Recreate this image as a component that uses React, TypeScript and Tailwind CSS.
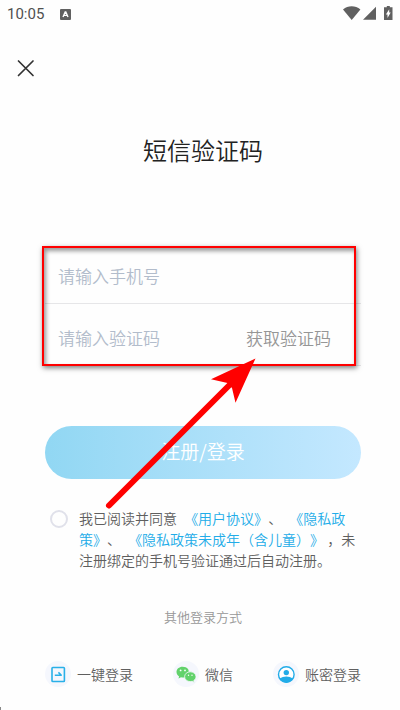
import { useState } from "react";

function StatusBar() {
  return (
    <div className="flex h-7 items-center justify-between px-[7px] text-[#606060]">
      <div className="flex items-center gap-4">
        <span className="font-[Roboto,sans-serif] text-[15px] font-normal leading-7 text-[#505050]">10:05</span>
        <svg viewBox="0 0 11 11" className="size-[11px]" aria-hidden="true">
          <rect width="11" height="11" rx="1" fill="currentColor" />
          <path
            d="M3 8 5.2 3h.6L8 8M3.9 6.4h3.2"
            fill="none"
            stroke="#fff"
            strokeWidth="1.4"
          />
        </svg>
      </div>
      <svg viewBox="0 0 50 16" className="h-4 w-[50px]" fill="currentColor" aria-hidden="true">
        <path d="M0 3.500C5-.7 12.400-.7 17.400 3.500L8.700 14Z" />
        <path d="M33 .8V13.800H20Z" />
        <path d="M43.800 0h3v1.200H49.500v12.800H41V1.200h2.800Z" />
        <path d="M46.200 3.200v3.300h1.500l-3.200 5.600V8.400h-1.600Z" fill="#fff" />
      </svg>
    </div>
  );
}

// Seta vermelha que aponta para o botão do código
function Arrow() {
  return (
    <svg
      viewBox="0 0 156 156"
      className="pointer-events-none absolute left-[59px] top-[114px] z-10 size-[156px]"
      aria-hidden="true"
    >
      <path d="M5 149.500 131 23.500" stroke="#f00" strokeWidth="6" strokeLinecap="round" />
      <path d="M151.500 2.500 107 23.200 123.500 27 128 32 131.500 46.800Z" fill="#f00" />
    </svg>
  );
}

function OneKeyIcon() {
  return (
    <svg viewBox="0 0 26 26" className="size-[26px]" fill="none" aria-hidden="true">
      <rect x="7" y="6.500" width="12.400" height="14" rx=".8" stroke="#29b0e8" strokeWidth="1.600" />
      <path d="M9.800 14.200h7M13.400 11.400l3 2.800" stroke="#29b0e8" strokeWidth="1.500" />
    </svg>
  );
}

function WechatIcon() {
  return (
    <svg viewBox="0 0 26 26" className="size-[26px]" aria-hidden="true">
      <path
        d="M9.600 5.700C5.900 5.700 3.500 8 3.500 11c0 1.900 1 3.400 2.600 4.400l-.6 2.200 2.500-1.300c1 .3 2.200.4 3.300.2C17 15.500 16 9.500 15 8 13.800 6.500 12 5.700 9.600 5.700Z"
        fill="#62d26b"
      />
      <path
        d="M17.300 10.800c-3.300 0-5.700 2.200-5.700 4.900s2.400 4.900 5.700 4.900c.7 0 1.400-.1 2-.3l2 1.100-.5-1.900c1.400-.9 2.200-2.200 2.200-3.800 0-2.700-2.500-4.900-5.700-4.900Z"
        fill="#62d26b"
        stroke="#f5f7fd"
        strokeWidth=".8"
      />
      <circle cx="7.600" cy="9.400" r=".9" fill="#fff" />
      <circle cx="12" cy="9.400" r=".9" fill="#fff" />
      <circle cx="15.500" cy="14.200" r=".7" fill="#fff" />
      <circle cx="19" cy="14.200" r=".7" fill="#fff" />
    </svg>
  );
}

function AccountIcon() {
  return (
    <svg viewBox="0 0 26 26" className="size-[26px]" aria-hidden="true">
      <circle cx="13.300" cy="13.500" r="7.800" fill="#fff" stroke="#22ace8" strokeWidth="1.400" />
      <circle cx="13.300" cy="11.600" r="2.700" fill="#22ace8" />
      <path d="M6.700 17.500c3.800-2.700 9.400-2.700 13.200 0-1.200 2.300-3.600 4.200-6.600 4.200s-5.400-1.900-6.600-4.200Z" fill="#22ace8" />
    </svg>
  );
}

const loginMethods = [
  { label: "一键登录", Icon: OneKeyIcon },
  { label: "微信", Icon: WechatIcon },
  { label: "账密登录", Icon: AccountIcon },
];

const inputClass =
  "min-w-0 flex-1 bg-transparent text-[17px] text-[#333] outline-none placeholder:text-[#b2bccb]";

export default function App() {
  const [phone, setPhone] = useState("");
  const [code, setCode] = useState("");
  const [agreed, setAgreed] = useState(false);

  return (
    <div className="relative min-h-screen bg-[#fefefe] font-['Noto_Sans_CJK_SC',sans-serif] font-[350] text-[#5f5f5f]">
      <StatusBar />
      <header className="flex px-4 pt-7">
        <button type="button" aria-label="关闭" className="flex size-6 items-center">
          <svg viewBox="0 0 20 20" className="size-5" aria-hidden="true">
            <path d="m2.500 3 14.500 14.500M17 3 2.500 17.500" stroke="#333" strokeWidth="1.700" strokeLinecap="round" />
          </svg>
        </button>
      </header>

      <main className="pl-[45px] pr-[39px]">
        <h1 className="mt-[52px] text-center text-2xl font-[350] leading-9 text-[#222]">短信验证码</h1>

        <form className="relative mt-[74px]" onSubmit={(e) => e.preventDefault()}>
          <div className="relative">
            <div className="flex h-[62px] items-center border-b border-[#e6e6e8] px-[13px] pt-[6px]">
              <input
                type="tel"
                aria-label="手机号"
                placeholder="请输入手机号"
                className={inputClass}
                value={phone}
                onChange={(e) => setPhone(e.target.value)}
              />
            </div>
            <div className="flex h-[62px] items-center border-b border-[#e6e6e8] pl-[13px] pr-[30px] pt-[6px]">
              <input
                type="text"
                aria-label="验证码"
                placeholder="请输入验证码"
                className={inputClass}
                value={code}
                onChange={(e) => setCode(e.target.value)}
              />
              <button type="button" className="shrink-0 text-[17px] text-[#969696]">
                获取验证码
              </button>
            </div>
            <div className="pointer-events-none absolute -left-[3px] bottom-0 right-[5px] top-1 border-2 border-[#f00] shadow-[1px_2px_5px_rgba(0,0,0,0.5),inset_2px_3px_4px_rgba(0,0,0,0.4)]" />
          </div>
          <Arrow />
          <button
            type="submit"
            className="mt-[60px] h-[53px] w-full rounded-full bg-linear-to-r from-[#91d7f3] to-[#c4e8ff] pb-[2px] text-[19px] text-white"
          >
            注册/登录
          </button>
        </form>

        <div className="mt-7 flex items-start gap-[11px] pl-[5px]">
          <input
            id="agree"
            type="checkbox"
            checked={agreed}
            onChange={(e) => setAgreed(e.target.checked)}
            className="mt-[3px] size-[18px] shrink-0 appearance-none rounded-full border-2 border-[#e0e1ea] checked:bg-[#22ace8]"
          />
          <label htmlFor="agree" className="pt-px text-sm leading-[21px] [text-spacing-trim:space-all]">
            我已阅读并同意{" "}
            <a href="#user" className="ml-1 text-[#22ace8]">《用户协议》</a>、{" "}
            <a href="#privacy" className="ml-1 text-[#22ace8]">《隐私政策》</a>、{" "}
            <a href="#minor" className="ml-1 text-[#22ace8]">《隐私政策未成年（含儿童）》</a>{" "}
            ，未注册绑定的手机号验证通过后自动注册。
          </label>
        </div>

        <p className="mt-9 text-center text-[13px] leading-5 text-[#979797]">其他登录方式</p>

        <div className="mt-[34px] flex justify-between">
          {loginMethods.map(({ label, Icon }) => (
            <button key={label} type="button" className="flex items-center gap-[6px] text-sm">
              <span className="rounded-full bg-[#f5f7fd]">
                <Icon />
              </span>
              {label}
            </button>
          ))}
        </div>
      </main>
      <span className="absolute bottom-0 left-0 h-[3px] w-px bg-[#888]" />
    </div>
  );
}
